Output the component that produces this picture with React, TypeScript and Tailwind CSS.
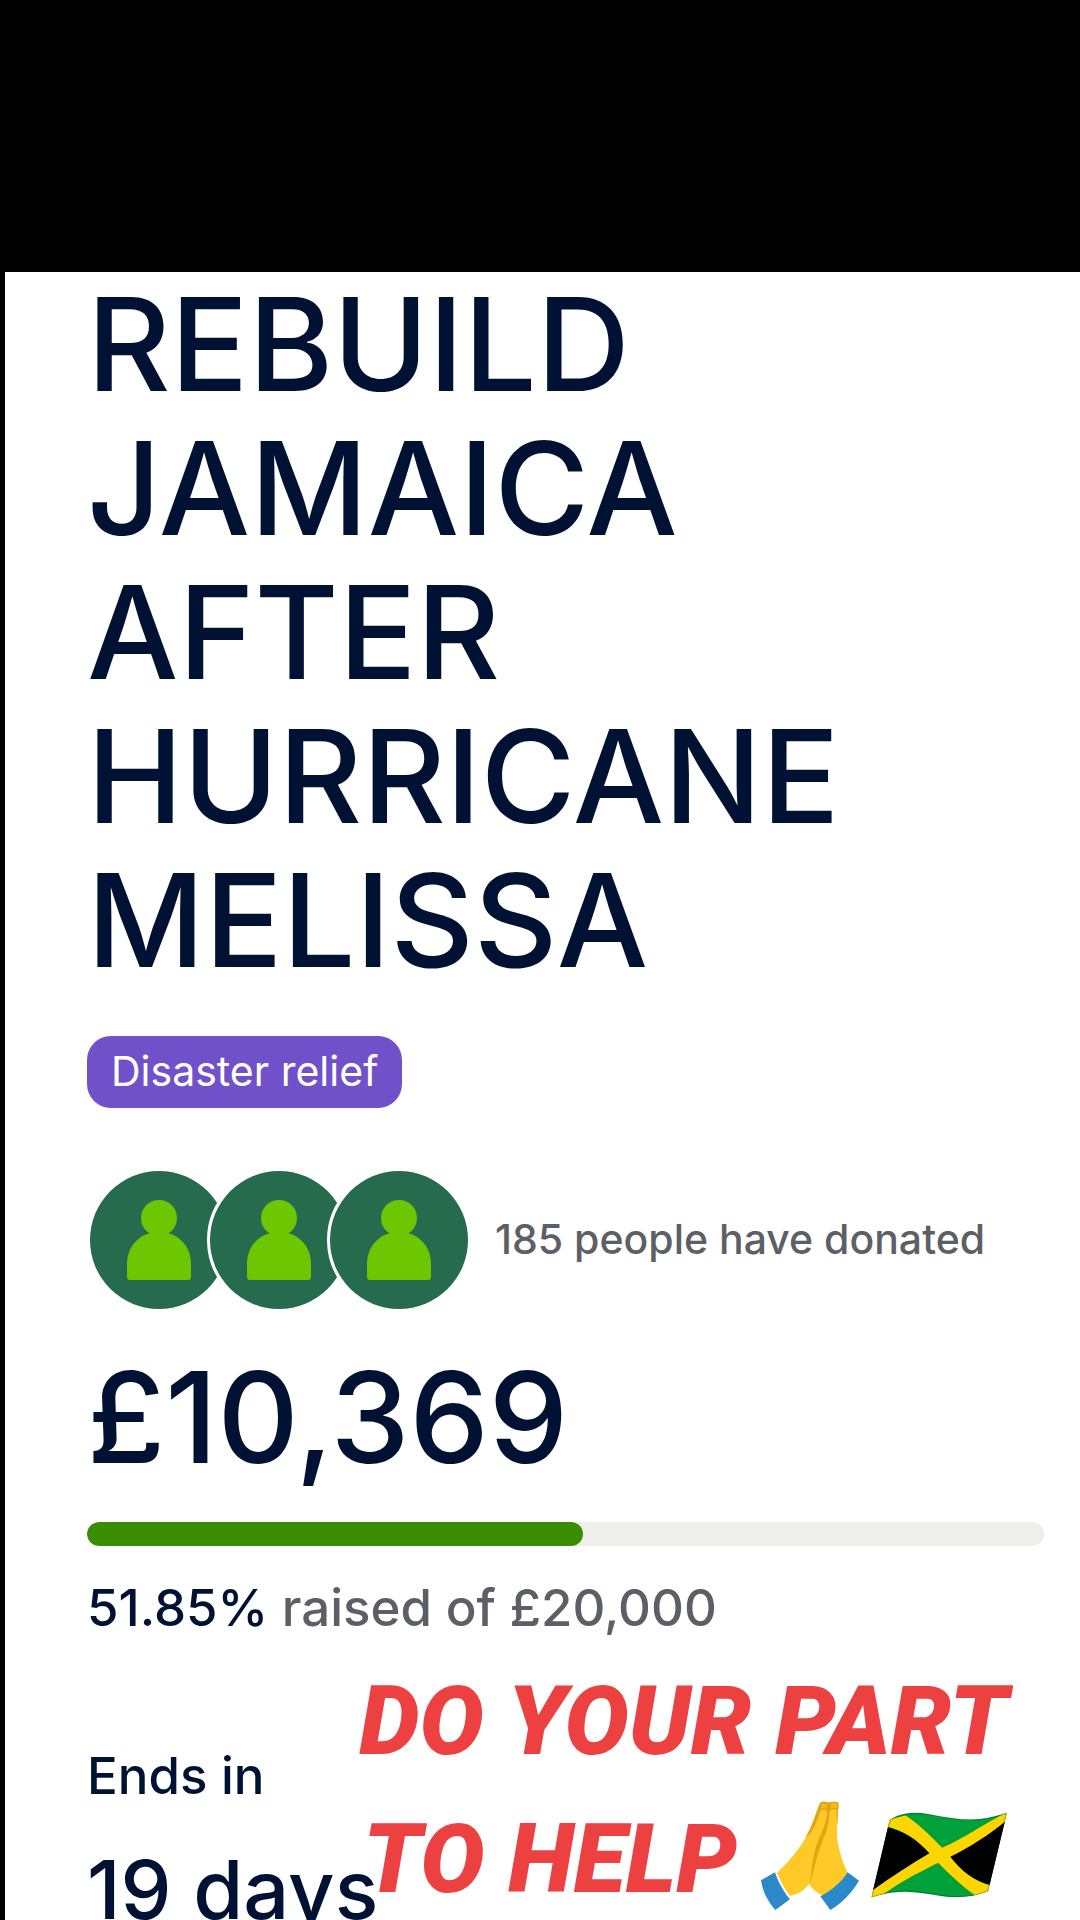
const donors = ['donor-1', 'donor-2', 'donor-3'];

const campaign = {
    title: 'REBUILD JAMAICA AFTER HURRICANE MELISSA',
    category: 'Disaster relief',
    donorCount: 185,
    raised: '£10,369',
    goal: '£20,000',
    percent: 51.85,
    daysLeft: 19,
};

const Avatar = () => (
    <svg viewBox="0 0 138 138" className="size-full" aria-hidden="true">
        <circle cx="69" cy="69" r="69" fill="#276b4e" />
        <circle cx="69" cy="47" r="18" fill="#6dc600" />
        <path
            d="M37 106V93C37 74 51 61 69 61S101 74 101 93V106Q101 109 98 109H40Q37 109 37 106Z"
            fill="#6dc600"
        />
    </svg>
);

const PrayingHands = () => (
    <svg viewBox="66 64 294 327" className="h-[109px] w-[98px] shrink-0" role="img" aria-label="Folded hands">
        <path
            d="M242 72C247 65 256 64 264 68C271 70 275 66 283 66L296 67C300 71 299 78 297 94C294 118 295 140 294 168C296 200 309 245 326 279C305 310 283 332 256 349C234 342 217 325 211 312C199 329 180 342 153 349C137 330 124 302 114 280C151 245 183 207 205 164C220 136 229 105 242 72Z"
            fill="#ffc928"
        />
        <path
            d="M242 72C247 65 256 64 264 68C271 70 275 66 283 66L296 67C300 71 299 78 297 94L295 135C291 118 293 104 293 91C286 87 278 88 272 95C271 118 268 140 260 160C251 182 243 204 234 232C227 260 220 286 213 313C218 270 221 229 233 195C244 166 257 144 261 118C264 106 266 99 264 95C258 89 250 89 244 94C238 116 231 134 219 153C213 163 207 169 200 174C219 139 230 105 242 72Z"
            fill="#e2a610"
        />
        <path d="M247 76Q256 68 264 77Q263 84 260 88Q252 84 246 88ZM276 73Q286 68 294 73L293 85Q284 83 276 88Z" fill="#f6bb20" />
        <path d="M66 302L108 278C116 303 131 333 153 359L109 391C86 365 70 333 66 302Z" fill="#2b88c9" />
        <path d="M326 278L360 303C339 338 311 369 274 391L244 350C275 335 308 307 326 278Z" fill="#2b88c9" />
    </svg>
);

const JamaicaFlag = () => (
    <svg viewBox="396 100 412 258" className="h-[86px] w-[137px] shrink-0" role="img" aria-label="Flag of Jamaica">
        <defs>
            <clipPath id="flag-shape">
                <path d="M452 124C486 101 529 98 575 107C628 117 679 126 724 121C753 117 779 111 805 101L748 338C707 355 656 360 607 352C560 345 511 334 461 342C439 345 420 350 397 357Z" />
            </clipPath>
        </defs>
        <g clipPath="url(#flag-shape)">
            <path d="M390 90H815V365H390Z" fill="#00a13a" />
            <path d="M440 145C491 155 535 181 572 224C517 257 456 296 400 338ZM634 234C690 206 747 169 803 125L755 319C706 308 666 276 634 234Z" fill="#000" />
            <path
                d="M443 139C442 126 450 121 462 119L500 110C535 132 572 168 610 207C677 178 742 133 808 98L803 125C748 171 691 206 634 234C666 276 706 308 757 321L746 342L709 350C672 324 635 290 598 252C547 278 489 306 436 345L396 360L400 336C456 296 517 257 572 224C535 181 491 154 443 143Z"
                fill="#ffd500"
            />
            <path
                d="M452 124C486 101 529 98 575 107C628 117 679 126 724 121C753 117 779 111 805 101L748 338C707 355 656 360 607 352C560 345 511 334 461 342C439 345 420 350 397 357Z"
                fill="none"
                stroke="#000"
                strokeOpacity="0.2"
                strokeWidth="7"
            />
        </g>
    </svg>
);

const Sticker = () => (
    <div className="absolute right-[72px] -bottom-2 flex flex-col items-end font-['Roboto',sans-serif] text-[96px] leading-[138px] font-black text-[#ec4041] italic">
        <p>DO YOUR PART</p>
        <div className="flex items-center">
            <p className="mr-6">TO HELP</p>
            <div className="mb-2 flex items-center gap-3">
                <PrayingHands />
                <JamaicaFlag />
            </div>
        </div>
    </div>
);

export default function App() {
    return (
        <div className="relative flex h-screen flex-col overflow-hidden bg-black pt-[272px] pl-[5px]">
            <main className="flex-1 bg-white pr-9 pl-[82px] font-['Inter',sans-serif] text-[#001233]">
                <h1 className="max-w-[800px] text-[129px] leading-[144px] font-medium">{campaign.title}</h1>

                <span className="mt-11 flex h-[72px] w-fit items-center rounded-3xl bg-[#7151c9] px-6 text-[41px] text-white">
                    {campaign.category}
                </span>

                <div className="mt-[60px] flex items-center">
                    <div className="flex -space-x-6">
                        {donors.map((donor) => (
                            <div key={donor} className="size-36 rounded-full border-[3px] border-white bg-white">
                                <Avatar />
                            </div>
                        ))}
                    </div>
                    <p className="ml-6 text-[41px] font-medium whitespace-nowrap text-[#5c6066]">
                        {campaign.donorCount} people have donated
                    </p>
                </div>

                <p className="mt-[33px] text-[126px] leading-[144px] font-medium">{campaign.raised}</p>

                <div
                    className="mt-[33px] h-6 overflow-hidden rounded-full bg-[#f0eee9]"
                    role="progressbar"
                    aria-label="Amount raised"
                    aria-valuenow={campaign.percent}
                    aria-valuemin={0}
                    aria-valuemax={100}
                >
                    <div className="h-full rounded-full bg-[#388e00]" style={{ width: `${campaign.percent}%` }} />
                </div>

                <p className="mt-6 text-[51px] leading-[76px] font-medium text-[#5c6066]">
                    <span className="text-[#001233]">{campaign.percent}%</span> raised of {campaign.goal}
                </p>

                <p className="mt-[92px] text-[51px] leading-[76px] font-medium">Ends in</p>
                <p className="mt-7 text-[81px] leading-24 font-medium">{campaign.daysLeft} days</p>
            </main>

            <Sticker />
        </div>
    );
}
